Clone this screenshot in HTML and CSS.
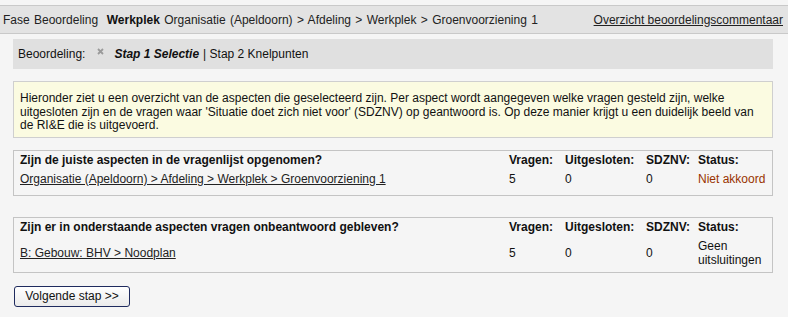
FILE: index.html
```html
<!DOCTYPE html>
<html lang="nl">
  <head>
    <meta charset="UTF-8" />
    <title>Fase Beoordeling</title>
    <link rel="stylesheet" href="styles.css">
  </head>

  <body>
    <!-- Kopbalk met pad en link naar commentaar -->
    <div class="topbar">
      <div class="path">
        Fase Beoordeling&nbsp; <b>Werkplek</b> Organisatie (Apeldoorn) &gt; Afdeling &gt; Werkplek &gt; Groenvoorziening 1
      </div>
      <a href="#" class="toplink">Overzicht beoordelingscommentaar</a>
    </div>

    <div class="content">
      <!-- Stappen -->
      <div class="steps">
        <span class="steps-label">Beoordeling:</span>
        <svg class="close" width="7" height="7" viewBox="0 0 7 7">
          <path d="M1 1 L6 6 M6 1 L1 6" stroke="#9a9a9a" stroke-width="1.8" />
        </svg>
        <span class="step-current">Stap 1 Selectie</span>
        <span class="step-next">| Stap 2 Knelpunten</span>
      </div>

      <div class="info">
        Hieronder ziet u een overzicht van de aspecten die geselecteerd zijn. Per aspect wordt aangegeven welke vragen gesteld zijn, welke
        uitgesloten zijn en de vragen waar 'Situatie doet zich niet voor' (SDZNV) op geantwoord is. Op deze manier krijgt u een duidelijk beeld van
        de RI&amp;E die is uitgevoerd.
      </div>

      <div class="box box-first">
        <div class="row head">
          <div>Zijn de juiste aspecten in de vragenlijst opgenomen?</div>
          <div>Vragen:</div>
          <div>Uitgesloten:</div>
          <div>SDZNV:</div>
          <div>Status:</div>
        </div>
        <div class="row data">
          <div><a href="#">Organisatie (Apeldoorn) &gt; Afdeling &gt; Werkplek &gt; Groenvoorziening 1</a></div>
          <div>5</div>
          <div>0</div>
          <div>0</div>
          <div class="status-bad">Niet akkoord</div>
        </div>
      </div>

      <div class="box box-second">
        <div class="row head">
          <div>Zijn er in onderstaande aspecten vragen onbeantwoord gebleven?</div>
          <div>Vragen:</div>
          <div>Uitgesloten:</div>
          <div>SDZNV:</div>
          <div>Status:</div>
        </div>
        <div class="row data">
          <div><a href="#">B: Gebouw: BHV &gt; Noodplan</a></div>
          <div>5</div>
          <div>0</div>
          <div>0</div>
          <div>Geen<br />uitsluitingen</div>
        </div>
      </div>

      <button type="button" class="next">Volgende stap &gt;&gt;</button>
    </div>
  </body>
</html>
```

FILE: styles.css
```css
* {
  box-sizing: border-box;
}

body {
  font-family: "Liberation Sans", Arial, sans-serif;
  font-size: 12px;
  color: #111;
  margin: 0;
  background-color: #f5f5f5;
}

a {
  color: #222;
}

.topbar {
  display: flex;
  justify-content: space-between;
  align-items: center;
  margin-top: 5px;
  height: 29px;
  padding: 0 5px 0 3px;
  background-color: #e3e3e3;
  border-top: 1px solid #c9c9c9;
  border-bottom: 1px solid #c9c9c9;
  color: #222;
}

.path {
  word-spacing: 1px;
}

.path b {
  color: #111;
}

.toplink {
  color: #222;
}

.content {
  padding: 0 15px 0 13px;
}

.steps {
  display: flex;
  align-items: center;
  margin-top: 5px;
  height: 30px;
  padding-left: 5px;
  background-color: #e0e0e0;
  color: #111;
}

.steps-label {
  margin-right: 12px;
}

.close {
  margin: -6px 10px 0 0;
}

.step-current {
  font-weight: bold;
  font-style: italic;
  margin-right: 4px;
}

.info {
  margin-top: 12px;
  padding: 10px 6px 4px 6px;
  line-height: 13.5px;
  background-color: #fbfbe1;
  border: 1px solid #cfcfcf;
  color: #111;
}

.box {
  min-height: 46px;
  padding: 1px 1px 5px 6px;
  border: 1px solid #c4c4c4;
}

.box-first {
  margin-top: 12px;
}

.box-second {
  margin-top: 21px;
}

.row {
  display: grid;
  grid-template-columns: 1fr 56px 81px 52px 73px;
  align-items: center;
}

.head {
  height: 17px;
  font-weight: bold;
}

.data {
  line-height: 14px;
}

.data > div {
  padding-top: 3px;
}

.status-bad {
  color: #993300;
}

.next {
  margin: 13px 0 0 1px;
  width: 116px;
  height: 21px;
  padding: 0 9px;
  font-family: "Liberation Sans", Arial, sans-serif;
  font-size: 12px;
  color: #111;
  background: linear-gradient(#ffffff, #ebebeb);
  border: 1px solid #1f2b5e;
  border-radius: 3px;
  cursor: pointer;
}
```
